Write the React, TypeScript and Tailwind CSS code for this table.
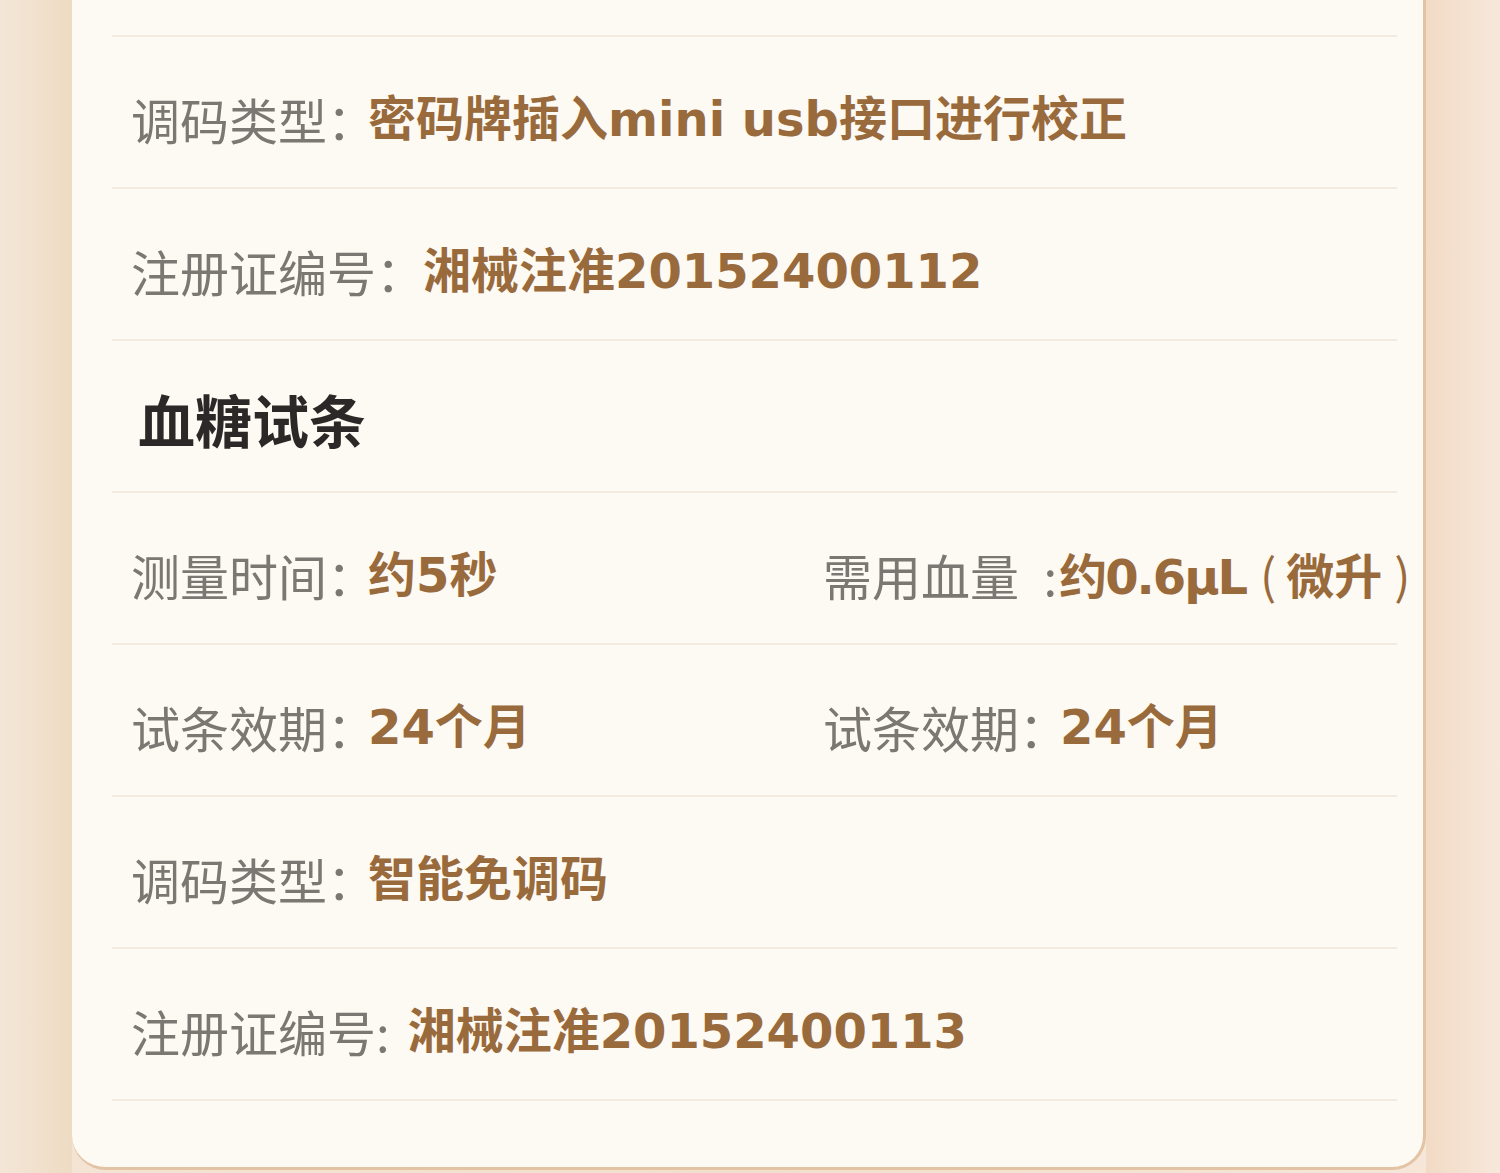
import React from 'react'

const labelFont = { fontFamily: '"Noto Sans CJK SC", sans-serif' }
const valueFont = { fontFamily: '"DejaVu Sans", "Noto Sans CJK SC", sans-serif' }

function Item({ label, value, gap = 'ml-0' }: { label: string; value: React.ReactNode; gap?: string }) {
  return (
    <div className="flex items-center whitespace-nowrap">
      <span style={labelFont} className="text-[49px] text-[#7b7773]">{label}</span>
      <span style={valueFont} className={`text-[48px] font-bold text-[#996a3b] ${gap}`}>{value}</span>
    </div>
  )
}

function Row({ children }: { children: React.ReactNode }) {
  return (
    <div className="h-[152px] border-b-2 border-[#f1ebe1] flex items-center pl-[19px] pt-[14px]">
      {children}
    </div>
  )
}

export default function App() {
  return (
    <div
      style={labelFont}
      className="w-[1500px] h-[1173px] overflow-hidden flex bg-gradient-to-r from-[#f4e4d4] via-[#f2dfcb] to-[#f6e7da]"
    >
      <div className="w-[72px] shrink-0 bg-gradient-to-r from-[#f4e6d8] to-[#eedbc3]" />
      <div className="w-[1354px] shrink-0 h-[1170px] bg-[#fdf9f3] rounded-b-[34px] border-r-[3px] border-b-[3px] border-[#e2c3a4] pl-[40px] pr-[26px]">
        <div className="h-[37px] border-b-2 border-[#f1ebe1]" />
        <Row>
          <Item label="调码类型：" value="密码牌插入mini usb接口进行校正" gap="-ml-[8px]" />
        </Row>
        <Row>
          <Item label="注册证编号：" value="湘械注准20152400112" gap="-ml-[2px]" />
        </Row>
        <Row>
          <h2 className="pl-[7px] -mt-[8px] text-[57px] font-bold text-[#2b2827]">血糖试条</h2>
        </Row>
        <Row>
          <div className="grid grid-cols-[692px_1fr]">
            <Item label="测量时间：" value="约5秒" gap="-ml-[8px]" />
            <Item
              label={'需用血量\u2002:'}
              gap="ml-[2px]"
              value={
                <>
                  <span className="tracking-[-2px]">约0.6μL</span>
                  <span style={labelFont} className="font-normal ml-[14px] mr-[10px]">(</span>
                  微升
                  <span style={labelFont} className="font-normal ml-[12px]">)</span>
                </>
              }
            />
          </div>
        </Row>
        <Row>
          <div className="grid grid-cols-[692px_1fr]">
            <Item label="试条效期：" value="24个月" gap="-ml-[8px]" />
            <Item label="试条效期：" value="24个月" gap="-ml-[8px]" />
          </div>
        </Row>
        <Row>
          <Item label="调码类型：" value="智能免调码" gap="-ml-[8px]" />
        </Row>
        <Row>
          <Item label="注册证编号:" value="湘械注准20152400113" gap="ml-[18px]" />
        </Row>
      </div>
      <div className="flex-1 bg-gradient-to-r from-[#f2dbc5] to-[#f7e8dc]" />
    </div>
  )
}
